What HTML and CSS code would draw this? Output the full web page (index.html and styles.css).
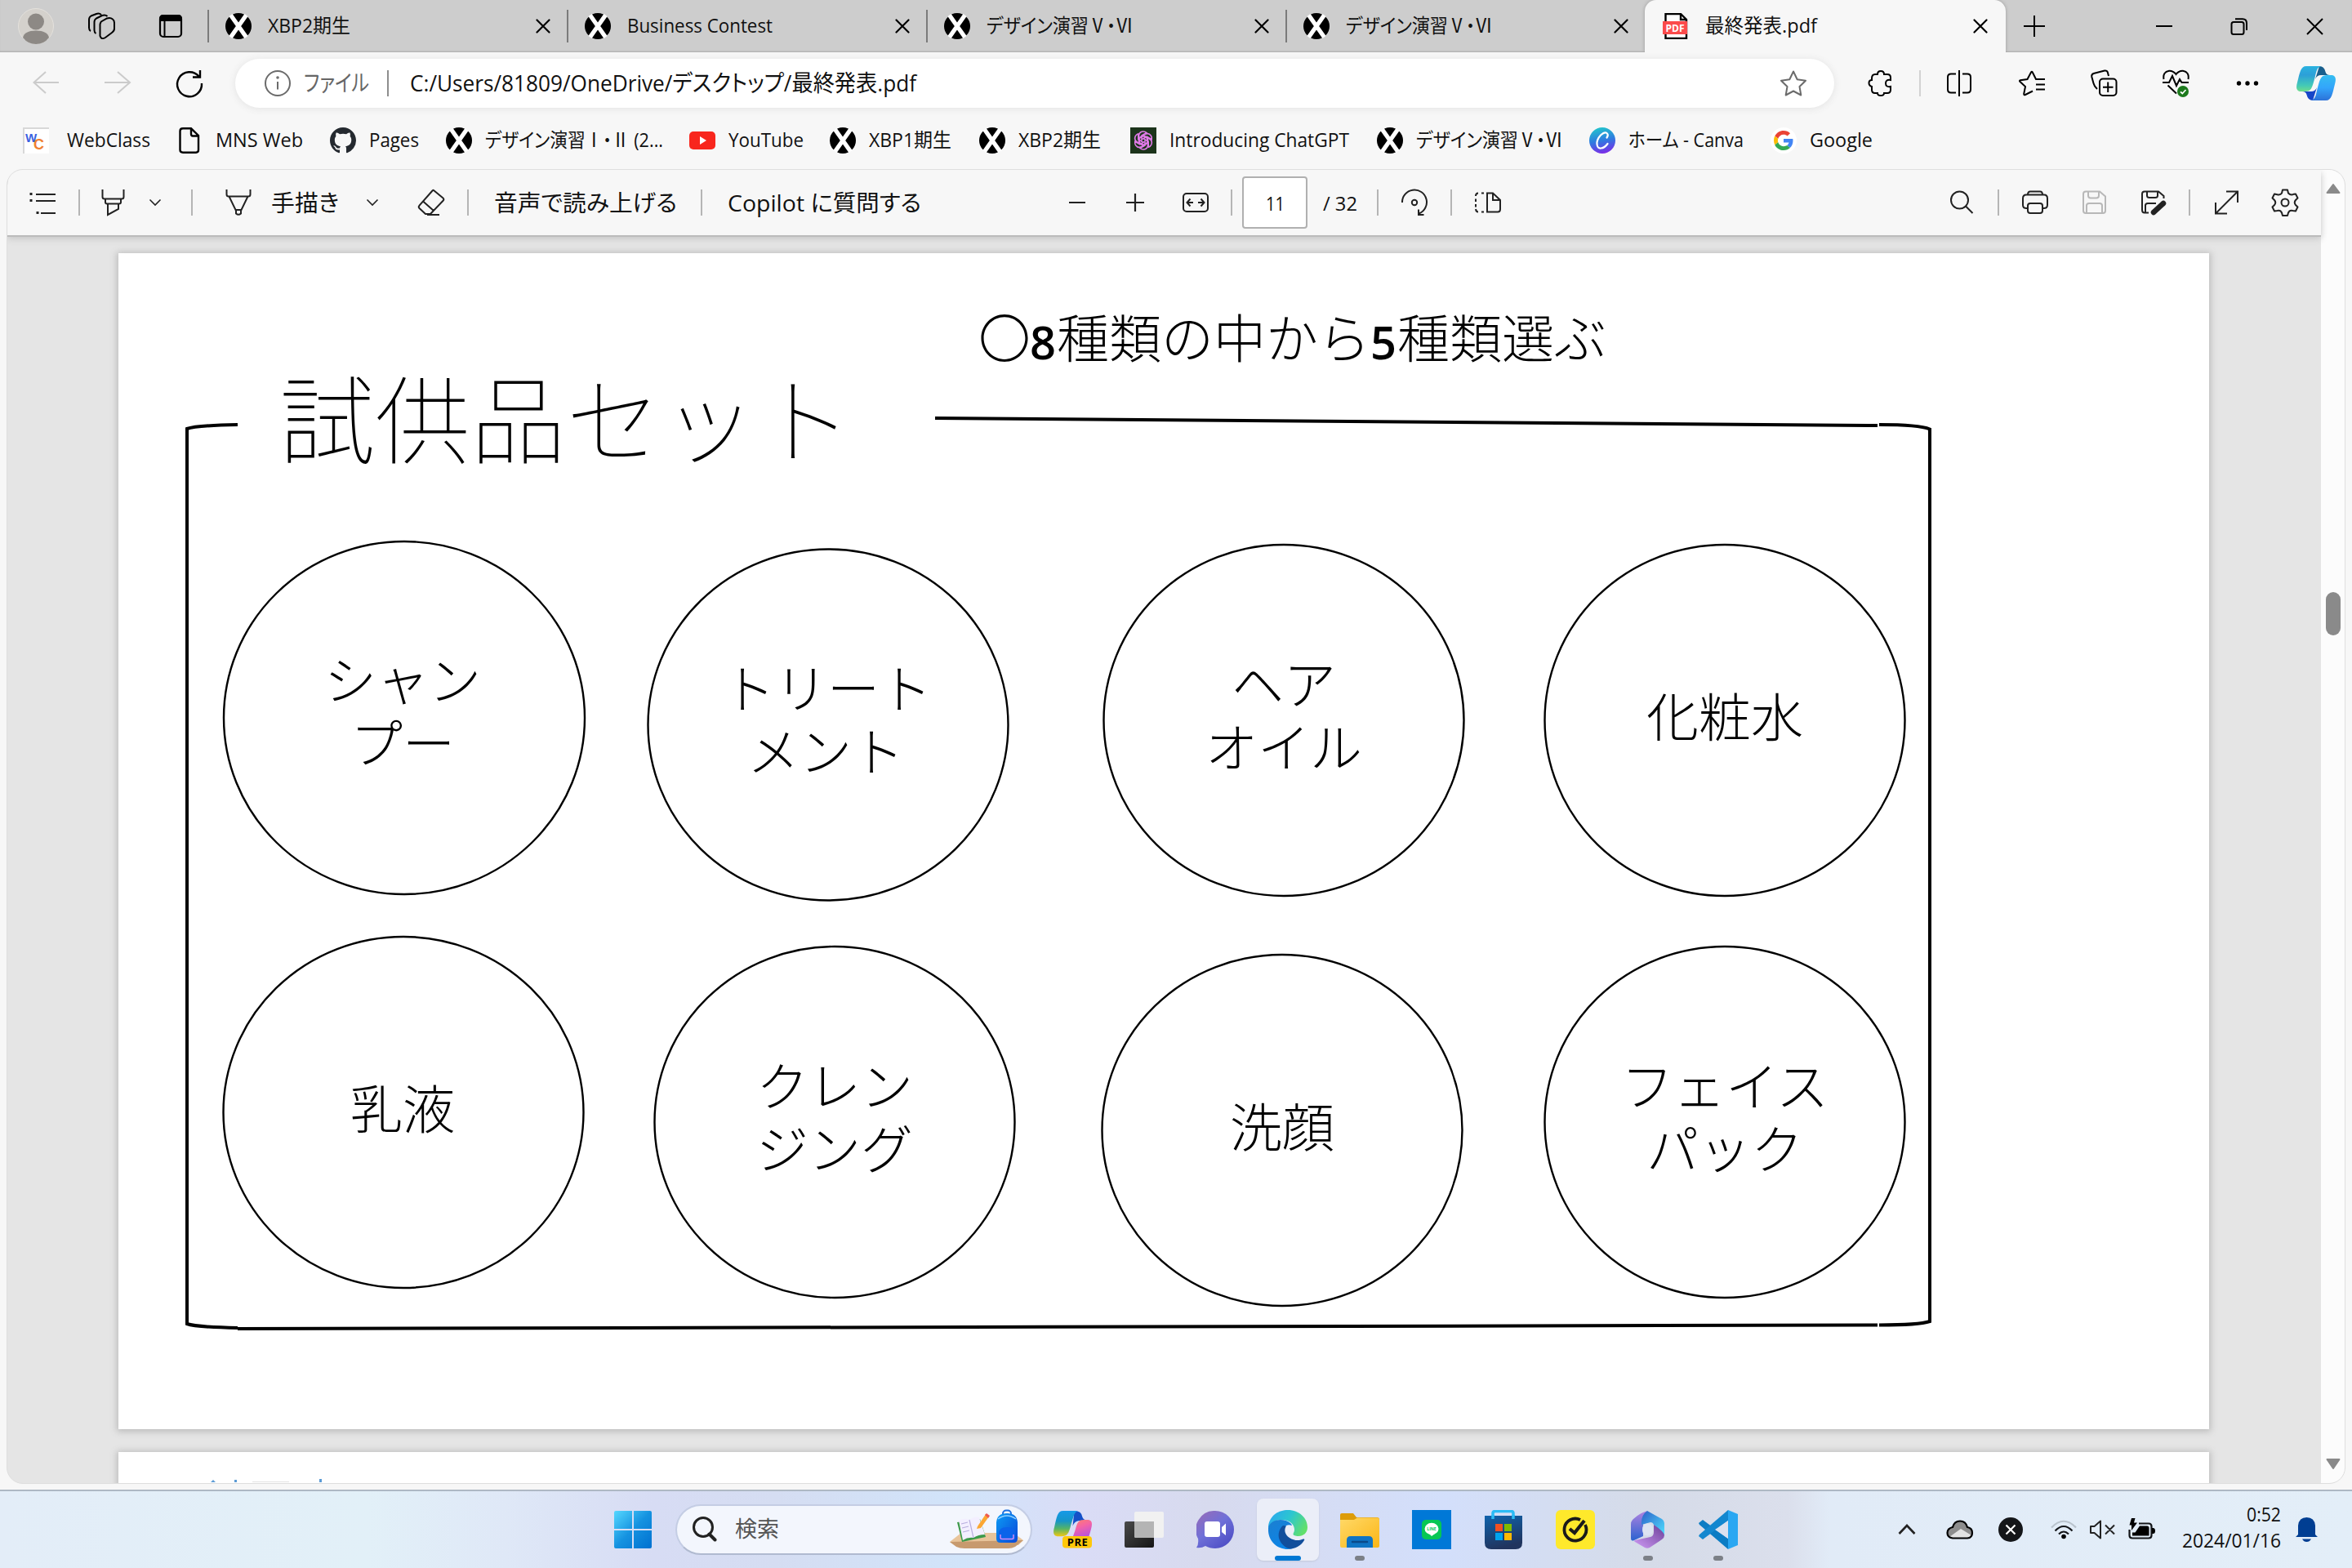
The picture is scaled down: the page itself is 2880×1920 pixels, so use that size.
FILE: index.html
```html
<!DOCTYPE html>
<html lang="ja">
<head>
<meta charset="utf-8">
<title>最終発表.pdf</title>
<link rel="stylesheet" href="styles.css">
</head>
<body>
<svg class="defs" width="0" height="0">
  <defs>
    <symbol id="xlogo" viewBox="0 0 32 32"><circle cx="16" cy="16" r="16" fill="#000"/><path d="M6.500 2.500 25.500 29.500M25.500 2.500 6.500 29.500" stroke="#fff" stroke-width="5.200"/></symbol>
    <symbol id="x17" viewBox="0 0 18 18"><path d="M1.500 1.500 16.500 16.500M16.500 1.500 1.500 16.500" stroke="#000" stroke-width="2.200" stroke-linecap="round"/></symbol>
    <linearGradient id="cpA" x1="0" y1="0" x2="0" y2="1"><stop offset="0" stop-color="#2bb3e0"/><stop offset=".35" stop-color="#2c9fd8"/><stop offset=".75" stop-color="#42c8b8"/><stop offset="1" stop-color="#6fdc8c"/></linearGradient>
    <linearGradient id="cpB" x1="0" y1="0" x2="0" y2="1"><stop offset="0" stop-color="#35bdf0"/><stop offset=".5" stop-color="#33a5fb"/><stop offset="1" stop-color="#2c72d8"/></linearGradient>
    <linearGradient id="cpC" x1="0" y1="0" x2="0" y2="1"><stop offset="0" stop-color="#1599e8"/><stop offset=".4" stop-color="#1695c8"/><stop offset=".7" stop-color="#56b465"/><stop offset="1" stop-color="#f3c712"/></linearGradient>
    <linearGradient id="cpD" x1="0" y1="0" x2=".4" y2="1"><stop offset="0" stop-color="#ff8a5c"/><stop offset=".45" stop-color="#f463a5"/><stop offset="1" stop-color="#a44ef0"/></linearGradient>
    <linearGradient id="win" x1="0" y1="0" x2="1" y2="1"><stop offset="0" stop-color="#55d8ff"/><stop offset=".5" stop-color="#1592e0"/><stop offset="1" stop-color="#0070d0"/></linearGradient>
    <linearGradient id="canva" x1=".4" y1="0" x2=".6" y2="1"><stop offset="0" stop-color="#22c3cc"/><stop offset=".5" stop-color="#2f7be0"/><stop offset="1" stop-color="#7d2ae8"/></linearGradient>
    <linearGradient id="chat" x1="0" y1="0" x2=".8" y2="1"><stop offset="0" stop-color="#9b6bb5"/><stop offset=".5" stop-color="#6f70d8"/><stop offset="1" stop-color="#4c4cc4"/></linearGradient>
    <linearGradient id="edgeA" x1="0" y1=".2" x2="1" y2=".6"><stop offset="0" stop-color="#2aa8f0"/><stop offset=".5" stop-color="#2cc6d0"/><stop offset="1" stop-color="#62e06a"/></linearGradient>
    <linearGradient id="edgeB" x1="0" y1="0" x2=".6" y2="1"><stop offset="0" stop-color="#1c7fd0"/><stop offset="1" stop-color="#0a84e8"/></linearGradient>
    <linearGradient id="fold" x1="0" y1="0" x2="1" y2="1"><stop offset="0" stop-color="#ffd968"/><stop offset="1" stop-color="#fbb616"/></linearGradient>
    <linearGradient id="store" x1="0" y1="0" x2=".3" y2="1"><stop offset="0" stop-color="#0f63ac"/><stop offset="1" stop-color="#20345e"/></linearGradient>
    <linearGradient id="m1" x1="0" y1="0" x2="0" y2="1"><stop offset="0" stop-color="#b083e0"/><stop offset="1" stop-color="#2a62d0"/></linearGradient>
    <linearGradient id="m2" x1="0" y1="0" x2="1" y2="1"><stop offset="0" stop-color="#2c5fc8"/><stop offset="1" stop-color="#4fe0ff"/></linearGradient>
    <linearGradient id="m3" x1="1" y1="0" x2="0" y2="1"><stop offset="0" stop-color="#6b3f98"/><stop offset="1" stop-color="#cf9bf5"/></linearGradient>
    <linearGradient id="tvA" x1="0" y1="0" x2="1" y2="1"><stop offset="0" stop-color="#4a4a4a"/><stop offset="1" stop-color="#151515"/></linearGradient>
    <linearGradient id="bag" x1="0" y1="0" x2="1" y2="1"><stop offset="0" stop-color="#0c9cf5"/><stop offset="1" stop-color="#0a48d8"/></linearGradient>
  </defs>
</svg>

<div class="screen">
  <header class="tabstrip">
    <div class="lead">
      <svg width="44" height="44"><circle cx="22" cy="22" r="21.500" fill="#d4d1cc" stroke="#e4e1dc"/><circle cx="22" cy="16.500" r="10" fill="#8d8985"/><path d="M6 36Q8 27.500 22 27.500T38 36Q32 44 22 44T6 36Z" fill="#8d8985"/></svg>
      <svg class="ic" width="34" height="34"><path d="M16 12 24 7.500Q28 6 31 8.500Q33 10 33 13V20Q33 23 30 25L22 31Q17 34 15.500 29V15Q15.500 13 17 12"/><path d="M10.500 26Q8.500 25 8.500 22V12Q8.500 9 11 7.500L18 4Q22 2.500 24.500 5M4 23Q2 22 2 19V9Q2 6 4.500 4.500L11 2Q14.500 .8 17 3"/></svg>
      <svg width="30" height="30"><rect x="2" y="2" width="26" height="26" rx="4" fill="none" stroke="#000" stroke-width="2.200"/><path d="M1 9V6Q1 1 6 1H24Q29 1 29 6V9Z"/><path d="M7.500 9V28" stroke="#000" stroke-width="2"/></svg>
    </div>
    <div class="tab"><svg class="fav"><use href="#xlogo"/></svg><svg class="lb" width="101"><text y="28" textLength="101" lengthAdjust="spacingAndGlyphs">XBP2期生</text></svg><svg class="close"><use href="#x17"/></svg></div>
    <div class="tab"><svg class="fav"><use href="#xlogo"/></svg><svg class="lb" width="178"><text y="28" textLength="178" lengthAdjust="spacingAndGlyphs">Business Contest</text></svg><svg class="close"><use href="#x17"/></svg></div>
    <div class="tab"><svg class="fav"><use href="#xlogo"/></svg><svg class="lb" width="180"><text y="28" textLength="180" lengthAdjust="spacingAndGlyphs">デザイン演習Ⅴ・Ⅵ</text></svg><svg class="close"><use href="#x17"/></svg></div>
    <div class="tab"><svg class="fav"><use href="#xlogo"/></svg><svg class="lb" width="180"><text y="28" textLength="180" lengthAdjust="spacingAndGlyphs">デザイン演習Ⅴ・Ⅵ</text></svg><svg class="close"><use href="#x17"/></svg></div>
    <div class="tab active">
      <svg class="fav" viewBox="0 0 32 32"><path d="M3.500 1H22L29 8V31H3.500Z" fill="#fff" stroke="#000" stroke-width="2.400"/><path d="M22 1V8H29" fill="none" stroke="#000" stroke-width="2.400"/><rect x="0" y="10" width="30" height="16" fill="#fb4b4b"/><text x="15" y="22.500" text-anchor="middle" class="pdf">PDF</text></svg>
      <svg class="lb" width="137"><text y="28" textLength="137" lengthAdjust="spacingAndGlyphs">最終発表.pdf</text></svg><svg class="close"><use href="#x17"/></svg></div>
    <div class="winctl">
      <svg class="ic" width="28" height="28"><path d="M14 1V27M1 14H27"/></svg>
      <svg class="ic" width="20" height="20"><path d="M0 10H20"/></svg>
      <svg class="ic" width="21" height="21"><rect x="1.500" y="5" width="15" height="15" rx="2.500"/><path d="M6 1.200H15Q20 1.200 20 6.500V15"/></svg>
      <svg class="ic" width="21" height="21"><path d="M1 1 20 20M20 1 1 20"/></svg>
    </div>
  </header>

  <div class="address">
    <svg class="ic dim" width="34" height="32"><path d="M16 2 1.500 15 16 28M2 15H32"/></svg>
    <svg class="ic dim" width="34" height="32"><path d="M16 2 31 15 16 28M30 15H0"/></svg>
    <svg class="ic" width="32" height="32"><path d="M27.500 7.500A15 15 0 1 0 31 16M29 0V8.500H20" stroke-width="2.400"/></svg>
    <div class="omni">
      <svg class="ic grey" width="32" height="32"><circle cx="16" cy="16" r="15"/><path d="M16 14V23.500"/><circle cx="16" cy="9" r=".8"/></svg>
      <svg class="lb url" width="79"><text class="g" x="-1" y="30" textLength="80" lengthAdjust="spacingAndGlyphs">ファイル</text></svg>
      <i class="sep"></i>
      <svg class="lb url" width="620"><text y="30" textLength="620" lengthAdjust="spacingAndGlyphs">C:/Users/81809/OneDrive/デスクトップ/最終発表.pdf</text></svg>
      <svg class="ic grey star" width="34" height="32"><path d="M17 1.500 21.700 11.200 32 12.700 24.500 20 26.300 30.500 17 25.500 7.700 30.500 9.500 20 2 12.700 12.300 11.200Z" stroke-linejoin="round"/></svg>
    </div>
    <svg class="ic" width="32" height="34"><path d="M4 11Q4 6 8 6H11Q11 2 15 2T19 6H23Q27 6 27 10V13Q21 12 21 17T27 21V25Q27 29 23 29H19Q19 32 15 32T11 29H8Q4 29 4 25V21Q.5 20 .5 16.500T4 13Z"/></svg>
    <i class="sep light"></i>
    <svg class="ic" width="32" height="32"><path d="M15 0V32M11 4.500H5Q1 4.500 1 8.500V23.500Q1 27.500 5 27.500H11M19 4.500H25Q29 4.500 29 8.500V23.500Q29 27.500 25 27.500H19"/></svg>
    <svg class="ic" width="34" height="32"><path d="M32 11H21L16.800 2.500Q16 1 15 2.500L10.500 11 2 12.200Q.2 12.700 1.500 14L8 20 6.200 29Q6.200 30.700 8 30L17 25.500M21 17.500H32M21 23.500H32"/></svg>
    <svg class="ic" width="34" height="34"><rect x="11" y="11.500" width="20.500" height="20.500" rx="4"/><path d="M21.200 15.500V28M15 21.700H27.500M8 24Q4.500 21 3.500 17L1.300 9Q.8 6 3.500 5L17 1.500Q20 1 20.800 3.500L22 8"/></svg>
    <svg width="34" height="34"><g class="ln"><path d="M1.500 12Q0 3 8 1.800Q13 1.500 16.500 6Q20 1.500 25 1.800Q33 3 31.500 12M0 16H8L12 8 17 20 21 12 23.500 16H32M6.500 19.500 17 29.500"/></g><circle cx="25" cy="27" r="7" fill="#1d7a1d"/><path d="M22 27.300 24.300 29.500 28.500 25" stroke="#fff" stroke-width="1.800" fill="none"/></svg>
    <svg width="28" height="8"><circle cx="3.500" cy="4" r="2.700"/><circle cx="14" cy="4" r="2.700"/><circle cx="24.500" cy="4" r="2.700"/></svg>
    <svg width="48" height="42"><path d="M28 0Q34 0 35.500 7Q36.500 11 41 11H30Q25 11 23 16Z" fill="#1a5f8c"/><path d="M12 0H30C24 2 24 9 22 16C19 27 18 31 10 31H6C0 31-1 27 1 20C4 8 5 0 12 0Z" fill="url(#cpA)"/><path d="M20 42Q14 42 12.500 35Q11.500 31 7 31H18Q23 31 25 26Z" fill="#1746c8"/><path d="M36 42H18C24 40 24 33 26 26C29 15 30 11 38 11H42C48 11 49 15 47 22C44 34 43 42 36 42Z" fill="url(#cpB)"/></svg>
  </div>

  <nav class="bookmarks">
    <div class="bm wc"><svg class="fav" viewBox="0 0 32 32"><rect width="32" height="32" fill="#fff"/><path d="M0 1H32M1 0V32" stroke="#d8d8d8" stroke-width="2"/><text x="3" y="18" class="wcw">W</text><text x="13" y="27" class="wcc">C</text></svg><svg class="lb" width="102"><text y="28" textLength="102" lengthAdjust="spacingAndGlyphs">WebClass</text></svg></div>
    <div class="bm"><svg class="fav ic" viewBox="0 0 32 32"><path d="M8 1.300H18L27 10V27.500Q27 30.700 24 30.700H8Q4.500 30.700 4.500 27.500V4.500Q4.500 1.300 8 1.300ZM18 1.300V8Q18 10.500 20 10.500H27" stroke-width="2.400"/></svg><svg class="lb" width="107"><text y="28" textLength="107" lengthAdjust="spacingAndGlyphs">MNS Web</text></svg></div>
    <div class="bm"><svg class="fav" viewBox="0 0 16 16"><path fill="#24292f" d="M8 0C3.580 0 0 3.580 0 8c0 3.540 2.290 6.530 5.470 7.590.4.070.55-.17.55-.38 0-.19-.01-.82-.01-1.490-2.010.37-2.530-.49-2.690-.94-.09-.23-.48-.94-.82-1.130-.28-.15-.68-.52-.01-.53.63-.01 1.080.58 1.230.82.72 1.210 1.870.87 2.330.66.07-.52.28-.87.510-1.070-1.780-.2-3.640-.89-3.640-3.950 0-.87.31-1.590.82-2.150-.08-.2-.36-1.020.08-2.120 0 0 .67-.21 2.200.82.64-.18 1.320-.27 2-.27s1.360.09 2 .27c1.530-1.040 2.200-.82 2.200-.82.44 1.100.16 1.920.08 2.120.51.56.82 1.270.82 2.150 0 3.070-1.870 3.750-3.650 3.950.29.25.54.73.54 1.480 0 1.070-.01 1.930-.01 2.200 0 .21.15.46.55.38A8.010 8.010 0 0 0 16 8c0-4.420-3.580-8-8-8Z"/></svg><svg class="lb" width="61"><text y="28" textLength="61" lengthAdjust="spacingAndGlyphs">Pages</text></svg></div>
    <div class="bm"><svg class="fav"><use href="#xlogo"/></svg><svg class="lb" width="218"><text y="28" textLength="218" lengthAdjust="spacingAndGlyphs">デザイン演習Ⅰ・Ⅱ (2...</text></svg></div>
    <div class="bm"><svg class="fav" viewBox="0 0 32 32"><rect y="5" width="32" height="22" rx="5" fill="#f8261d"/><path d="M13 11 21 16 13 21Z" fill="#fff"/></svg><svg class="lb" width="92"><text y="28" textLength="92" lengthAdjust="spacingAndGlyphs">YouTube</text></svg></div>
    <div class="bm"><svg class="fav"><use href="#xlogo"/></svg><svg class="lb" width="101"><text y="28" textLength="101" lengthAdjust="spacingAndGlyphs">XBP1期生</text></svg></div>
    <div class="bm"><svg class="fav"><use href="#xlogo"/></svg><svg class="lb" width="101"><text y="28" textLength="101" lengthAdjust="spacingAndGlyphs">XBP2期生</text></svg></div>
    <div class="bm"><svg class="fav" viewBox="0 0 32 32"><rect width="32" height="32" fill="#1c341b"/><g fill="none" stroke="#e07be8" stroke-width="1.600"><path id="k" d="M16 21.500 10.500 18.300V10.500Q10.800 5.500 15.500 5Q18 4.800 20 6.500L14 10V16.500"/><use href="#k" transform="rotate(60 16 16)"/><use href="#k" transform="rotate(120 16 16)"/><use href="#k" transform="rotate(180 16 16)"/><use href="#k" transform="rotate(240 16 16)"/><use href="#k" transform="rotate(300 16 16)"/></g></svg><svg class="lb" width="220"><text y="28" textLength="220" lengthAdjust="spacingAndGlyphs">Introducing ChatGPT</text></svg></div>
    <div class="bm"><svg class="fav"><use href="#xlogo"/></svg><svg class="lb" width="180"><text y="28" textLength="180" lengthAdjust="spacingAndGlyphs">デザイン演習Ⅴ・Ⅵ</text></svg></div>
    <div class="bm"><svg class="fav" viewBox="0 0 32 32"><circle cx="16" cy="16" r="16" fill="url(#canva)"/><path d="M21.500 12.500Q24 9 21.500 7T14 9.500Q9 15 9.500 20.500T14.500 25.500Q19 25 22.500 20" fill="none" stroke="#fff" stroke-width="2.200" stroke-linecap="round"/></svg><svg class="lb" width="141"><text y="28" textLength="141" lengthAdjust="spacingAndGlyphs">ホーム - Canva</text></svg></div>
    <div class="bm"><svg class="fav" viewBox="0 0 32 32"><circle cx="16" cy="16" r="16" fill="#fff"/><g transform="translate(4 4) scale(.5)"><path fill="#EA4335" d="M24 9.500c3.540 0 6.710 1.220 9.210 3.600l6.850-6.850C35.900 2.380 30.470 0 24 0 14.620 0 6.510 5.380 2.560 13.220l7.980 6.190C12.430 13.720 17.740 9.500 24 9.500z"/><path fill="#4285F4" d="M46.980 24.550c0-1.570-.15-3.090-.38-4.550H24v9.020h12.940c-.58 2.960-2.260 5.480-4.780 7.180l7.730 6c4.510-4.180 7.090-10.360 7.090-17.650z"/><path fill="#FBBC05" d="M10.530 28.590c-.48-1.450-.76-2.990-.76-4.590s.27-3.140.76-4.590l-7.980-6.190C.92 16.460 0 20.120 0 24c0 3.880.92 7.540 2.560 10.780l7.970-6.190z"/><path fill="#34A853" d="M24 48c6.480 0 11.930-2.130 15.890-5.810l-7.730-6c-2.150 1.450-4.920 2.300-8.160 2.300-6.260 0-11.570-4.220-13.470-9.910l-7.980 6.190C6.510 42.620 14.620 48 24 48z"/></g></svg><svg class="lb" width="77"><text y="28" textLength="77" lengthAdjust="spacingAndGlyphs">Google</text></svg></div>
  </nav>

  <main class="viewer">
    <div class="pane">
      <div class="pdfbar">
        <svg class="ic k" width="34" height="34"><path d="M9 8H33M9 16H33M15 31H33" transform="translate(-1 -1)" stroke-width="2.200"/><path d="M1 6V9M1 14V17M9 29V32" stroke-width="3" transform="translate(1 -1)"/></svg>
        <i class="sep"></i>
        <svg class="ic k" width="30" height="32"><path d="M1.500 0V9Q1.500 11.500 4 11.500H25Q27.500 11.500 27.500 9V0M5 11.500V15.500Q5 17.500 7 17.500H22Q24 17.500 24 15.500V11.500M8 17.500V31L21 24V17.500"/></svg>
        <svg class="ic k" width="16" height="10"><path d="M1.500 1.500 8 8 14.500 1.500" stroke-width="1.600"/></svg>
        <i class="sep"></i>
        <svg class="ic k" width="32" height="32"><path d="M1.500 0V6Q1.500 8.500 4 8.500H28Q30.500 8.500 30.500 6V0M4.500 8.500 12.500 25H19.500L27.500 8.500M13 25V29.500Q16 32 19 29.500V25"/></svg>
        <svg class="lb bar" width="82"><text x="-1" y="31" textLength="83" lengthAdjust="spacingAndGlyphs">手描き</text></svg>
        <svg class="ic k" width="16" height="10"><path d="M1.500 1.500 8 8 14.500 1.500" stroke-width="1.600"/></svg>
        <svg class="ic k" width="32" height="34"><path d="M19 2 30.500 11.500Q32 13 30.800 14.500L15 31H9L1.500 24Q0 22.300 1.500 20.700L17.500 2.500Q18.300 1.500 19 2ZM6 15.500 19 27M11 32H26" stroke-linejoin="round"/></svg>
        <i class="sep"></i>
        <svg class="lb bar" width="224"><text x="-1" y="31" textLength="224" lengthAdjust="spacingAndGlyphs">音声で読み上げる</text></svg>
        <i class="sep"></i>
        <svg class="lb bar" width="236"><text x="-2" y="31" textLength="237" lengthAdjust="spacingAndGlyphs">Copilot に質問する</text></svg>
        <svg class="ic k" width="20" height="20"><path d="M0 10H20" stroke-width="2.200"/></svg>
        <svg class="ic k" width="22" height="22"><path d="M11 0V22M0 11H22" stroke-width="2.200"/></svg>
        <svg class="ic k" width="32" height="24"><rect x="1" y="1" width="30" height="22" rx="4"/><path d="M5.500 12H13M19 12H26.500M9.500 7.500 5.500 12 9.500 16.500M22.500 7.500 26.500 12 22.500 16.500"/></svg>
        <i class="sep"></i>
        <div class="pageno"><svg class="lb" width="24"><text x="1" y="29.500" textLength="23" lengthAdjust="spacingAndGlyphs">11</text></svg></div>
        <svg class="lb" width="42"><text y="29.500" textLength="42" lengthAdjust="spacingAndGlyphs">/ 32</text></svg>
        <i class="sep"></i>
        <svg class="ic k" width="34" height="34"><path d="M1 17A15 15 0 1 1 21.500 30.500M27.500 32H21V25.500"/><circle cx="16" cy="17" r="3.200"/></svg>
        <i class="sep"></i>
        <svg class="ic k" width="34" height="26"><path d="M15 1.500H22L31 10V21Q31 24.500 28 24.500H15ZM22 1.500V10H31"/><path d="M11 1.500H8M4 1.500Q1 1.500 1 5M1 8.500V12M1 15V18.500M1 21Q1.500 24.500 4 24.500M8 24.500H11"/></svg>
        <svg class="ic k" width="30" height="30"><circle cx="11.500" cy="12" r="10.500"/><path d="M19 19.500 27.500 28"/></svg>
        <i class="sep"></i>
        <svg class="ic k" width="32" height="30"><path d="M7 22H5Q1 22 1 18V10Q1 5.500 5 5.500H27Q31 5.500 31 10V18Q31 22 27 22H25M7 5.500Q7 1.500 10 1.500H22Q25 1.500 25 5.500"/><rect x="7" y="16" width="18" height="12" rx="3"/></svg>
        <svg class="ic off" width="30" height="30"><path id="sv" d="M4 1.500H21L28 7.500V25Q28 28 25 28H4Q1 28 1 25V4.500Q1 1.500 4 1.500ZM7 1.500V6.500Q7 9.500 10 9.500H17Q20 9.500 20 6.500V1.500M5 28V18.500Q5 16 8 16H21Q24 16 24 18.500V28"/></svg>
        <svg class="ic k" width="34" height="32"><path d="M27.500 11V8L21 2.500H4Q1 2.500 1 5.500V25Q1 28.500 4 28.500H9M7 2.500V7.500Q7 10 10 10H17Q20 10 20 7.500V2.500M5 28.500V19.500Q5 17 8 17H18"/><path d="M27 17 15 28" stroke-width="6.500" stroke-linecap="round"/></svg>
        <i class="sep"></i>
        <svg class="ic k" width="30" height="30"><path d="M1 28.500 28 1.500M14 1.500H28V15M1 15V28.500H15"/></svg>
        <svg class="ic k gear" width="34" height="34"><path d="M13 5.500 14 1.500H20L21 5.500Q24 8.500 27.500 6.800L30 6.500 32.500 11.500 30 14Q27.500 17 30 20L32.500 22.500 30 27.500 26.500 27Q22.500 26 21 29.500L20 33H14L13 29.500Q11.500 26 7.500 27L4 27.500 1.500 22.500 4 20Q6.500 17 4 14L1.500 11.500 4 6.500 7.500 7.200Q11.500 8 13 5.500Z" stroke-linejoin="round"/><circle cx="17" cy="17" r="4.500"/></svg>
      </div>
      <div class="doc">
        <section class="page">
          <svg class="slide" viewBox="145 311 2560 1440" width="2560" height="1440">
            <g fill="none" stroke="#000">
              <g stroke-width="2.400">
                <ellipse cx="495" cy="880" rx="221" ry="216"/><ellipse cx="1014" cy="888.500" rx="220.500" ry="215"/><ellipse cx="1572" cy="883" rx="220.500" ry="215"/><ellipse cx="2112" cy="883" rx="220.500" ry="215"/>
                <ellipse cx="494" cy="1363" rx="220.500" ry="215"/><ellipse cx="1022" cy="1375" rx="220.500" ry="215"/><ellipse cx="1570" cy="1385" rx="220.500" ry="215"/><ellipse cx="2112" cy="1375" rx="220.500" ry="215"/>
              </g>
              <g stroke-width="4">
                <path d="M291 521Q240 522 229 526V1622Q240 1626 291 1627M1145 513 2299 522M2301 521Q2350 521 2363 526.500V1619Q2350 1623.500 2301 1623.500M291 1628 2299 1623.500"/>
              </g>
            </g>
            <text class="title" x="342" y="559.500" textLength="702">試供品セット</text>
            <text class="sub" y="439"><tspan x="1198">〇</tspan><tspan class="num" x="1261" y="440.500" textLength="32" lengthAdjust="spacingAndGlyphs">8</tspan><tspan x="1294" y="439">種類の中から</tspan><tspan class="num" x="1678" y="440.500" textLength="32" lengthAdjust="spacingAndGlyphs">5</tspan><tspan x="1711" y="439">種類選ぶ</tspan></text>
            <g class="item">
              <text y="858"><tspan x="493">シャン</tspan><tspan x="493" dy="77">プー</tspan></text>
              <text y="868"><tspan x="1013">トリート</tspan><tspan x="1011" dy="77">メント</tspan></text>
              <text y="863"><tspan x="1572">ヘア</tspan><tspan x="1572" dy="77">オイル</tspan></text>
              <text x="2112" y="903">化粧水</text>
              <text x="493" y="1383">乳液</text>
              <text y="1355"><tspan x="1022">クレン</tspan><tspan x="1022" dy="77">ジング</tspan></text>
              <text x="1570" y="1405">洗顔</text>
              <text y="1355"><tspan x="2112">フェイス</tspan><tspan x="2112" dy="77">パック</tspan></text>
            </g>
          </svg>
        </section>
        <section class="page">
          <svg width="400" height="37"><path d="M113 37 116 34 119 37ZM142 34H145V37H142ZM246 33H249V37H246Z" fill="#5b9bd5"/><path d="M164 36.500H209" stroke="#e4e4e4"/></svg>
        </section>
      </div>
    </div>
    <div class="scroll">
      <svg width="18" height="14"><path d="M9 2 16.500 12H1.500Z" fill="#8a8a8a" stroke="#8a8a8a" stroke-width="2" stroke-linejoin="round"/></svg>
      <div class="thumb"></div>
      <svg class="down" width="18" height="15"><path d="M9 13 16.500 2H1.500Z" fill="#8a8a8a" stroke="#8a8a8a" stroke-width="2" stroke-linejoin="round"/></svg>
    </div>
  </main>

  <footer class="taskbar">
    <svg width="46" height="46"><g fill="url(#win)"><path d="M2 0H22V22H0V2Q0 0 2 0ZM24 0H44Q46 0 46 2V22H24ZM0 24H22V46H2Q0 46 0 44ZM24 24H46V44Q46 46 44 46H24Z"/></g></svg>
    <div class="search">
      <svg width="30" height="31"><circle cx="13" cy="13" r="11.500" fill="none" stroke="#222" stroke-width="3"/><path d="M20.500 21.500 27.500 28.500" stroke="#222" stroke-width="4" stroke-linecap="round"/></svg>
      <svg class="lb find" width="54"><text y="29" textLength="54" lengthAdjust="spacingAndGlyphs">検索</text></svg>
      <svg class="art" width="90" height="50"><path d="M0 40 14 29H78L90 38 84 44H6Z" fill="#e8c49a"/><path d="M0 40 90 38 80 46Q76 48 72 48H18Q12 48 8 46Z" fill="#c79a6e"/><path d="M9 16 37 12 44 34 15 40Z" fill="#3d9a4a"/><path d="M11 14Q18 10 24 13Q30 8 36 10L43 31Q35 31 29 35Q22 34 16 38Z" fill="#f3efff"/><path d="M24 13 29 35M14 18 22 16M15 23 23 21M16 28 24 26" stroke="#b9aede" stroke-width="1.200"/><path d="M34 21 44 6 48 9 38 23 33 24Z" fill="#fba733"/><path d="M43 7 45 5 49 8 47 11Z" fill="#ee5a50"/><rect x="65" y="1.500" width="10" height="8" rx="4" fill="none" stroke="#1b6fe0" stroke-width="2"/><path d="M57 16Q58 5 70 5T83 16V36Q83 41 78 41H62Q57 41 57 36Z" fill="url(#bag)"/><path d="M59 12Q70 4 81 12" fill="none" stroke="#8fd0ff" stroke-width="1.500"/><path d="M60 30Q60 22 70 22T80 30V36Q80 38 78 38H62Q60 38 60 36Z" fill="#0b63ea"/><path d="M62 31V35Q62 36.500 64 36.500H76Q78 36.500 78 35V31" fill="none" stroke="#d48af5" stroke-width="1.500"/></svg>
    </div>
    <svg width="48" height="46"><g transform="scale(.98 .92)"><path d="M26 0Q35 0 36 8Q37 12 42 13H32Q26 14 24 20Z" fill="#1450c8"/><path d="M12 0H30C25 3 25 9 22 18C19 31 17 34 10 34H6C0 34-1 29 1 22C4 8 5 0 12 0Z" fill="url(#cpC)"/><path d="M36 44H14C23 42 24 35 27 26C30 15 31 12 38 12H42C48 12 49 16 47 24C44 36 42 44 36 44Z" fill="url(#cpD)"/></g><rect x="11" y="31" width="36" height="14.500" rx="4" fill="#ffc80a"/><text x="29.500" y="43" text-anchor="middle" class="pre">PRE</text></svg>
    <svg width="48" height="46"><rect x="0" y="13" width="36" height="32" rx="2" fill="url(#tvA)"/><rect x="12" y="1" width="36" height="32" rx="2" fill="#f1f1f1"/><path d="M12 13H36V33H14Q12 33 12 31Z" fill="#b4b4b4"/></svg>
    <svg width="46" height="46"><path d="M23 0A23 23 0 0 1 23 46Q16 46 11 43Q6 46 0 45Q3 41 2 34A23 23 0 0 1 23 0Z" fill="url(#chat)"/><rect x="10" y="13" width="19" height="19" rx="3" fill="#fff"/><path d="M31 20 36 15.500V30L31 26Z" fill="#fff"/></svg>
    <div class="app edge"><svg width="48" height="48" viewBox="0 0 48 48"><path d="M0 20C2 6 13 0 24 0C38 0 48 10 48 21C48 28 43 32 37 32C33 32 30.500 31 30.500 29.500C30.500 28 32 27 32 24C32 19 28 12 16 12C7 12 1 18 0 24Z" fill="url(#edgeA)"/><path d="M0 22C1 16 7 12 15 12C24 12 29 17 29 19C22 16 18 22 18 26C18 40 28 46 34 44C31 47 28 48 24 48C10 48-1 37 0 22Z" fill="url(#edgeB)"/><path d="M18 19C12 24 11 33 15 39C18 44 23 47 27 47.500C36 47 42 41 44 37C45 35.500 43.500 35 42 35.800C38 37.500 32 38 26 34C20 30 19 24 22 19.500Z" fill="#124f9c"/></svg><b class="dot on"></b></div>
    <div class="app"><svg width="48" height="48"><path d="M0 6Q0 4 2 4H16L20 9H45Q48 9 48 12V18H0Z" fill="#dd9c0a"/><path d="M0 12H17L21 9.500H46Q48 9.500 48 12V44Q48 46 46 46H2Q0 46 0 44Z" fill="url(#fold)"/><path d="M8 46V37Q8 32 13 32H35Q40 32 40 37V46Z" fill="#0f74c4"/><path d="M15 39H33" stroke="#0a4a8a" stroke-width="2.500" stroke-linecap="round"/></svg><b class="dot"></b></div>
    <svg width="48" height="48"><rect width="48" height="48" fill="#0078d7"/><rect x="12" y="12" width="24" height="24" rx="5" fill="#06c755"/><ellipse cx="24" cy="23" rx="8.500" ry="7.200" fill="#fff"/><path d="M21 29 24 32 28 29Z" fill="#fff"/><text x="24" y="25" text-anchor="middle" class="line">LINE</text></svg>
    <svg width="46" height="48"><path d="M10 11V4Q10 1.500 13 1.500H32Q35 1.500 35 4V11" fill="none" stroke="#2bbcf5" stroke-width="3.500"/><path d="M0 7H46V40Q46 48 38 48H8Q0 48 0 40Z" fill="url(#store)"/><path d="M10 6V11M35 6V11" stroke="#2bbcf5" stroke-width="3.500"/><path fill="#f25022" d="M13 17H22V26H13Z"/><path fill="#7fba00" d="M24 17H33V26H24Z"/><path fill="#00a4ef" d="M13 28H22V37H13Z"/><path fill="#ffb900" d="M24 28H33V37H24Z"/></svg>
    <svg width="48" height="48"><rect width="48" height="48" rx="6" fill="#ffe92b"/><path d="M30 12A13.500 13.500 0 1 0 36 18" fill="none" stroke="#1a1a1a" stroke-width="3.800"/><path d="M17 23 23 28 35 13" fill="none" stroke="#1a1a1a" stroke-width="4.200"/></svg>
    <div class="app m365"><svg width="42" height="46"><path d="M20 0C13 2 6 7 2 11Q0 13 0 17V33Q0 38 4 36L15 31V14Q15 5 20 0Z" fill="url(#m1)"/><path d="M20 0Q13 5 13 14V17L24 14Q27 14 28 17L41 30V15Q41 12 38 10Z" fill="url(#m2)"/><path d="M28 17V26Q28 31 24 32L5 36Q3 37 5 38L17 45Q20 46.500 23 45L38 35Q41 33 41 30Q41 26 28 17Z" fill="url(#m3)"/><path d="M20 15.500Q27 16 27 23T20.500 30.500Q14 30 14 23T20 15.500Z" fill="#dde3f2"/></svg><b class="dot"></b></div>
    <div class="app"><svg width="49" height="48"><path d="M36 0 48 5V43L36 48Z" fill="#2aa7f2"/><path d="M0 16 5 12 36 35V48L1 18Z" fill="#0b7cc4"/><path d="M0 32 5 36 36 13V0L1 30Z" fill="#1387cf"/><path d="M36 13V35L20 24Z" fill="#dbe1ef"/></svg><b class="dot"></b></div>
    <svg class="ic k" width="24" height="14"><path d="M1.500 12 11 2 20.500 12" stroke-width="2.600"/></svg>
    <svg width="34" height="26"><path d="M8 23.500Q1.500 22.500 1.500 17T8 10Q10 2.500 17 2.500T26 10Q32 11 32 17T26 23.500Z" fill="#8d8d8d"/><path d="M4 22 18 12 31 20Q29 23 26 23.500H8Z" fill="#e2e2e2"/><path d="M8 23.500Q1.500 22.500 1.500 17T8 10Q10 2.500 17 2.500T26 10Q32 11 32 17T26 23.500Z" fill="none" stroke="#000" stroke-width="2.200"/></svg>
    <svg width="30" height="30"><circle cx="15" cy="15" r="15" fill="#141619"/><path d="M9.500 9.500 20.500 20.500M20.500 9.500 9.500 20.500" stroke="#fff" stroke-width="2.200"/></svg>
    <svg width="32" height="24"><g fill="none" stroke-width="2.200"><path d="M1 9.500Q16-6 31 9.500" stroke="#b9c3cd"/><path d="M5.500 13.500Q16 2.500 26.500 13.500M10 17.500Q16 11.500 22 17.500" stroke="#141619"/></g><circle cx="16" cy="20.500" r="2.800"/></svg>
    <svg class="ic k" width="32" height="24"><path d="M1 8H5.500L13 1.500V22.500L5.500 16H1ZM19 6.500 30 17.500M30 6.500 19 17.500" stroke-linejoin="round"/></svg>
    <svg width="34" height="28"><path d="M13 6.500H25Q28.500 6.500 28.500 10V21Q28.500 24.500 25 24.500H5Q1.500 24.500 1.500 21V14" fill="none" stroke="#141619" stroke-width="2.200"/><path d="M5 21.500V17.500H8.500L14 9.500H23Q25.500 9.500 25.500 12V21.500Z"/><path d="M29 12H30.500Q33 12 33 15.500T30.500 19H29ZM4 0H8.500L7 5.500H11L4 15V8.500H1.500Z"/></svg>
    <div class="clock"><svg class="lb" width="121" height="32"><text x="79" y="22" textLength="42" lengthAdjust="spacingAndGlyphs">0:52</text></svg><svg class="lb" width="121" height="32"><text y="22" textLength="121" lengthAdjust="spacingAndGlyphs">2024/01/16</text></svg></div>
    <svg width="27" height="31"><path d="M3 22V11Q4 1 13.500 1T24 11V22L27 25H0ZM8 27.500H19Q17 31 13.500 31T8 27.500Z" fill="#003e92"/></svg>
  </footer>
</div>
</body>
</html>
```
FILE: styles.css
```css
* { box-sizing: border-box; }
body { margin: 0; background: #f7f7f7; font-family: "Open Sans", "Noto Sans CJK JP", sans-serif; }
svg { display: block; flex: none; }
.defs { position: absolute; }
.screen { width: 2880px; height: 1920px; display: flex; flex-direction: column; overflow: hidden; }

.ic { fill: none; stroke: #000; stroke-width: 2; overflow: visible; }
.ln { fill: none; stroke: #000; stroke-width: 2; }
.k { stroke: #222; }
.dim { stroke: #cbcbcb; }
.grey { stroke: #6b6b6b; }
.off { stroke: #b8b8b8; }
.lb { height: 40px; overflow: visible; font-size: 24px; fill: #111; font-feature-settings: "palt"; }
.lb.url { font-size: 28px; }
.lb.bar { font-size: 28px; }
.lb.find { font-size: 27px; fill: #555; }
.g { fill: #666; }
.fav { width: 32px; height: 32px; }
.sep { width: 2px; height: 32px; background: #b5b5b5; }
.sep.light { background: #d2d2d2; }

/* Tab strip */
.tabstrip { height: 64px; flex: none; background: #cdcdcd; box-shadow: inset 0 -2px 2px -1px #a8a8a8; display: grid; grid-template-columns: 254px repeat(4, 440px) 442px 424px; align-items: center; }
.lead { display: grid; grid-template-columns: 85px 87px auto; padding-left: 22px; align-items: center; }
.tab { display: flex; align-items: center; padding: 0 20px; height: 40px; border-left: 2px solid #7b7b7b; }
.tab .lb { margin-left: 20px; }
.close { width: 18px; height: 18px; margin-left: auto; }
.tab.active { height: 64px; padding: 0 22px; border: 0; background: #f7f7f7; border-radius: 14px 14px 0 0; box-shadow: 0 0 4px #9a9a9a; }
.pdf { font: 700 12px "Open Sans", sans-serif; fill: #fff; }
.winctl { display: grid; grid-template-columns: 163px 91px 93px auto; padding-left: 21px; align-items: center; }

/* Address row */
.address { position: relative; height: 76px; flex: none; background: #f7f7f7; padding-left: 40px; display: grid; align-items: center; grid-template-columns: 88px 88px 72px 2000px 62px 34px 88px 88px 88px 90px 74px auto; }
.omni { width: 1958px; height: 60px; border-radius: 30px; background: #fff; box-shadow: 0 1px 10px #e2e2e2; display: flex; align-items: center; padding: 0 33px 0 36px; }
.omni .url { margin-left: 17px; }
.omni .sep { margin: 0 9px 0 22px; background: #8d8d8d; }
.star { margin-left: auto; }

/* Bookmarks */
.bookmarks { height: 64px; flex: none; padding-left: 28px; display: grid; align-items: center; grid-template-columns: 188px 188px 142px 298px 172px 183px 185px 302px 260px 222px auto; }
.bm { display: flex; align-items: center; gap: 16px; }
.bm.wc { gap: 22px; }
.wcw { font: 700 15px "Liberation Sans", sans-serif; fill: #3b62e0; }
.wcc { font: 700 18px "Liberation Sans", sans-serif; fill: #f08030; }

/* Viewer */
.viewer { margin: 3px 8px 7px; height: 1610px; flex: none; border: 1px solid #dedede; border-radius: 20px; overflow: hidden; display: flex; background: #e5e5e5; }
.pane { width: 2833px; }
.pdfbar { position: relative; z-index: 1; height: 80px; background: #f7f7f7; box-shadow: 0 2px 0 #bbb, 0 4px 8px #c4c4c4; padding-left: 27px; display: grid; align-items: center; grid-template-columns: 60px 28px 58px 52px 42px 57px 115px 64px 60px 34px 252px 35px 416px 70px 69px 59px 14px 99px 66px 30px 60px 30px 582px 58px 30px 74px 72px 58px 32px 69px auto; }
.pageno { width: 80px; height: 64px; border: 2px solid #b0b0b0; border-radius: 4px; background: #fff; display: flex; align-items: center; justify-content: center; }
.doc { padding: 22px 0 0 136px; display: flex; flex-direction: column; gap: 28px; }
.page { width: 2560px; height: 1440px; background: #fff; box-shadow: 0 1px 8px 2px #bcbcbc; }
.title { font: 100 117px "Noto Sans CJK JP", sans-serif; }
.sub { font: 300 64px "Noto Sans CJK JP", sans-serif; }
.num { font: 600 56px "Open Sans", sans-serif; }
.item { font: 300 64px "Noto Sans CJK JP", sans-serif; text-anchor: middle; }
.scroll { flex: 1; background: #fcfcfc; display: flex; flex-direction: column; align-items: center; padding: 16px 0 16px; }
.thumb { width: 18px; height: 53px; border-radius: 9px; background: #8a8a8a; margin-top: 487px; }
.down { margin-top: auto; }

/* Taskbar */
.taskbar { height: 96px; flex: none; border-top: 2px solid #aeb8c4; padding: 0 0 1px 752px; display: grid; align-items: center; grid-template-columns: 75px 463px 87px 88px 74px 102px 88px 89px 87px 92px 83px 244px 59px 64px 64px 48px 47px 66px 139px auto; background: linear-gradient(90deg, #e3edf8 0, #e2f0f8 450px, #dfe8f7 620px, #d7dcf4 800px, #d5ddf2 950px, #d1e4fa 1180px, #dadcf6 1330px, #d7daee 1480px, #d3dffb 1770px, #d5dbe8 2020px, #dbdfec 2190px, #e1ebf7 2240px, #e3eef8 100%); }
.search { width: 437px; height: 62px; border-radius: 31px; border: 2px solid #c4cde4; border-bottom-color: #b0bad0; background: #f3f6fd; display: flex; align-items: center; padding: 0 9px 0 19px; }
.find { margin-left: 22px; }
.art { margin-left: auto; }
.pre { font: 700 13px "Open Sans", sans-serif; letter-spacing: .5px; }
.line { font: 700 5px "Open Sans", sans-serif; fill: #06c755; }
.app { position: relative; height: 76px; width: 48px; display: flex; align-items: center; justify-content: center; }
.m365 { width: 41px; }
.edge { width: 76px; background: #ebeef8; border-radius: 8px; box-shadow: 0 1px 2px #c2c8da; }
.dot { position: absolute; bottom: 0; left: 50%; width: 12px; height: 6px; margin-left: -6px; border-radius: 3px; background: #7c8087; }
.dot.on { width: 32px; margin-left: -16px; background: #0078d4; }
.clock { display: flex; flex-direction: column; }
.clock .lb { height: 32px; }
```
